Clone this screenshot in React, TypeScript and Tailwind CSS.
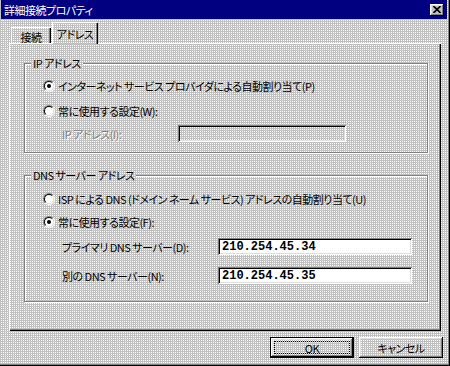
const face = "font-['Noto_Sans_CJK_JP','Noto_Sans',sans-serif] [font-feature-settings:'palt'_1]";
const dither = "bg-[#c0c0c0] bg-[image:conic-gradient(#fff_25%,#c0c0c0_0)] bg-[length:2px_2px]";
const raised =
  "shadow-[inset_-1px_-1px_#000,inset_1px_1px_#fff,inset_-2px_-2px_#808080,inset_2px_2px_#dfdfdf]";
const sunken =
  "shadow-[inset_1px_1px_#808080,inset_-1px_-1px_#fff,inset_2px_2px_#000,inset_-2px_-2px_#dfdfdf]";
const etched = "border border-[#808080] shadow-[inset_1px_1px_#fff,1px_1px_#fff]";
const disabled = "text-[#808080] [text-shadow:1px_1px_0_#fff]";

function Radio({ checked }: { checked?: boolean }) {
  return (
    <span className="flex size-[12px] shrink-0 items-center justify-center rounded-full border border-t-[#808080] border-l-[#808080] border-r-white border-b-white">
      <span className="flex size-[10px] items-center justify-center rounded-full border border-t-black border-l-black border-r-[#dfdfdf] border-b-[#dfdfdf] bg-white">
        {checked ? <span className="size-[4px] rounded-full bg-black" /> : null}
      </span>
    </span>
  );
}

function Option({ label, checked }: { label: string; checked?: boolean }) {
  return (
    <div className="flex h-[16px] items-center gap-[3px]">
      <Radio checked={checked} />
      <span>{label}</span>
    </div>
  );
}

function Group({
  title,
  className,
  children,
}: {
  title: string;
  className: string;
  children: React.ReactNode;
}) {
  return (
    <div className={`relative w-[404px] ${etched} ${className}`}>
      <span className={`absolute -top-[7px] left-[6px] px-[2px] ${dither}`}>{title}</span>
      {children}
    </div>
  );
}

function Field({ label, value, box }: { label: string; value?: string; box: string }) {
  return (
    <div className="ml-[19px] flex h-[17px] items-center">
      <span className={`shrink-0 ${value === undefined ? `w-[116px] ${disabled}` : "w-[156px]"}`}>
        {label}
      </span>
      <div
        className={`flex h-[17px] items-center pl-[4px] font-['Liberation_Mono',monospace] text-[12px] font-bold tracking-normal ${sunken} ${box}`}
      >
        {value}
      </div>
    </div>
  );
}

function CloseButton() {
  return (
    <span className={`flex h-[12px] w-[14px] items-center justify-center bg-[#c0c0c0] ${raised}`}>
      <svg width="8" height="7" viewBox="0 0 8 7">
        <path d="M0.5 0 L7.5 7 M7.5 0 L0.5 7" stroke="#000" strokeWidth="1.6" />
      </svg>
    </span>
  );
}

export default function App() {
  return (
    <div
      className={`${face} ${dither} flex h-[366px] w-[450px] flex-col text-[11px] leading-[12px] tracking-[-0.5px] text-black shadow-[inset_-1px_-1px_#000,inset_-2px_-2px_#808080]`}
    >
      <div className="mr-[3px] ml-[1px] flex h-[19px] shrink-0 items-center justify-between bg-[#000080] pr-[3px] pl-[3px]">
        <span className="text-white">詳細接続プロパティ</span>
        <CloseButton />
      </div>

      <div className="mt-[3px] flex h-[22px] shrink-0 items-end pl-[11px]">
        <div className="flex h-[17px] w-[40px] items-start justify-center pt-[4px] shadow-[inset_1px_1px_#fff,inset_-1px_0_#000,inset_-2px_0_#808080]">
          接続
        </div>
        <div
          className={`relative z-10 ml-[1px] flex h-[22px] w-[46px] items-start justify-center pt-[6px] ${dither} shadow-[inset_1px_1px_#fff,inset_-1px_0_#000,inset_-2px_0_#808080]`}
        >
          アドレス
        </div>
      </div>

      <div
        className={`-mt-[1px] ml-[9px] h-[288px] w-[432px] shrink-0 pt-[20px] pl-[15px] ${dither} shadow-[inset_1px_1px_#fff,inset_-1px_-1px_#000,inset_-2px_-2px_#808080]`}
      >
        <Group title="IP アドレス" className="h-[90px] pt-[14px] pl-[18px]">
          <Option label="インターネット サービス プロバイダによる自動割り当て(P)" checked />
          <div className="mt-[9px]">
            <Option label="常に使用する設定(W):" />
          </div>
          <div className="mt-[6px]">
            <Field label="IP アドレス(I):" box="w-[168px]" />
          </div>
        </Group>

        <Group title="DNS サーバー アドレス" className="mt-[22px] h-[127px] pt-[15px] pl-[18px]">
          <Option label="ISP による DNS (ドメイン ネーム サービス) アドレスの自動割り当て(U)" />
          <div className="mt-[7px]">
            <Option label="常に使用する設定(F):" checked />
          </div>
          <div className="mt-[8px]">
            <Field label="プライマリ DNS サーバー(D):" value="210.254.45.34" box="w-[194px] bg-white" />
          </div>
          <div className="mt-[12px]">
            <Field label="別の DNS サーバー(N):" value="210.254.45.35" box="w-[194px] bg-white" />
          </div>
        </Group>
      </div>

      <div className="mt-[6px] flex shrink-0 justify-end gap-[5px] pr-[7px]">
        <button type="button" className="flex h-[21px] w-[84px] border border-black">
          <span className={`flex flex-1 p-[3px] ${raised}`}>
            <span className="flex flex-1 items-center justify-center border border-dotted border-black">
              OK
            </span>
          </span>
        </button>
        <button
          type="button"
          className={`flex h-[21px] w-[84px] items-center justify-center ${raised}`}
        >
          キャンセル
        </button>
      </div>
    </div>
  );
}
